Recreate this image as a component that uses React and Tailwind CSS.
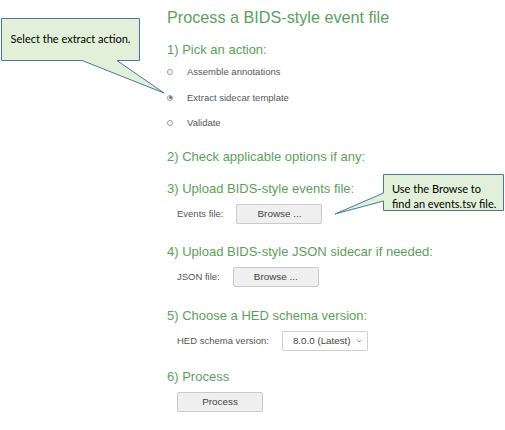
import React from 'react';

const Heading = ({ className = '', children }) => (
  <div className={`h-[16px] leading-[16px] text-[13px] text-[#5c9f5c] ${className}`}>{children}</div>
);

const Radio = ({ label, checked }) => (
  <div className="flex h-[25.5px] items-center">
    <span className="flex h-[6px] w-[6px] items-center justify-center rounded-full border border-[#9a9a9a] bg-white">
      {checked && <span className="h-[3px] w-[3px] rounded-full bg-[#6f6f6f]" />}
    </span>
    <span className="ml-[14px] text-[9.5px] leading-[12px] text-[#555]">{label}</span>
  </div>
);

const GrayButton = ({ children }) => (
  <button className="h-[20px] w-[86px] rounded-[2px] border border-[#c9c9c9] bg-[#efefef] text-[9.9px] leading-[18px] text-[#444]">
    {children}
  </button>
);

const FieldRow = ({ label, className = '', children }) => (
  <div className={`flex h-[20px] items-center pl-[10px] ${className}`}>
    <span className="mr-[13px] text-[9.5px] leading-[12px] text-[#555]">{label}</span>
    {children}
  </div>
);

export default function App() {
  return (
    <div className="relative h-[430px] w-[505px] overflow-hidden bg-white font-['Liberation_Sans',Arial,sans-serif]">
      <div className="pl-[167px] pt-[7px]">
        <div className="h-[20px] text-[16.2px] leading-[20px] text-[#5c9f5c]">Process a BIDS-style event file</div>

        <Heading className="mt-[15px]">1) Pick an action:</Heading>
        <div className="mt-[1.5px]">
          <Radio label="Assemble annotations" />
          <Radio label="Extract sidecar template" checked />
          <Radio label="Validate" />
        </div>

        <Heading className="mt-[13px]">2) Check applicable options if any:</Heading>

        <Heading className="mt-[15.5px]">3) Upload BIDS-style events file:</Heading>
        <FieldRow label="Events file:" className="mt-[7.5px]">
          <GrayButton>Browse ...</GrayButton>
        </FieldRow>

        <Heading className="mt-[19.5px]">4) Upload BIDS-style JSON sidecar if needed:</Heading>
        <FieldRow label="JSON file:" className="mt-[7.5px]">
          <GrayButton>Browse ...</GrayButton>
        </FieldRow>

        <Heading className="mt-[20.5px]">5) Choose a HED schema version:</Heading>
        <FieldRow label="HED schema version:" className="mt-[7.5px]">
          <div className="flex h-[20px] w-[86px] items-center rounded-[2px] border border-[#cfcfcf] bg-white pl-[10px] pr-[5px]">
            <span className="flex-1 text-[9.8px] text-[#444]">8.0.0 (Latest)</span>
            <svg width="6" height="4" viewBox="0 0 6 4" className="text-[#999]">
              <path d="M0.5 0.5 L3 3 L5.5 0.5" fill="none" stroke="currentColor" strokeWidth="0.9" />
            </svg>
          </div>
        </FieldRow>

        <Heading className="mt-[17.5px]">6) Process</Heading>
        <div className="mt-[7.5px] flex h-[20px] pl-[10px]">
          <GrayButton>Process</GrayButton>
        </div>
      </div>

      {/* callout shapes */}
      <svg className="pointer-events-none absolute left-0 top-0" width="505" height="430">
        <polygon
          points="1.5,18.5 139.5,18.5 139.5,60.5 117,60.5 164,93 82,60.5 1.5,60.5"
          fill="#e2f0d9"
          stroke="#4a74a3"
          strokeWidth="1"
        />
        <polygon
          points="383.5,174.5 503.5,174.5 503.5,210.5 383.5,210.5 383.5,201 335,214 383.5,193"
          fill="#e2f0d9"
          stroke="#4a74a3"
          strokeWidth="1"
        />
      </svg>

      <div className="absolute left-[1px] top-[18px] flex h-[42px] w-[139px] items-center justify-center whitespace-nowrap font-['Lato',sans-serif] text-[11px] text-black">
        Select the extract action.
      </div>
      <div className="absolute left-[392px] top-[181px] whitespace-nowrap font-['Lato',sans-serif] text-[11px] leading-[15px] text-black">
        <div>Use the Browse to</div>
        <div>find an events.tsv file.</div>
      </div>
    </div>
  );
}
